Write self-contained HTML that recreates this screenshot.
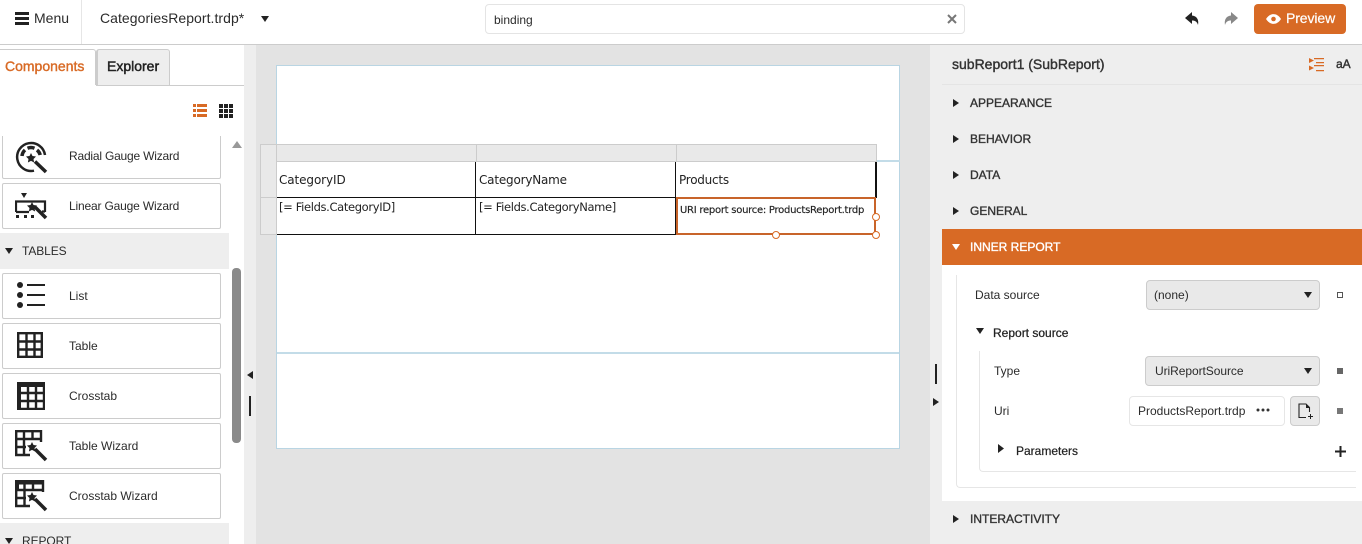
<!DOCTYPE html>
<html><head><meta charset="utf-8"><style>
html,body{margin:0;padding:0;width:1362px;height:544px;overflow:hidden;background:#fff}
body{position:relative;font-family:"Liberation Sans",sans-serif;font-size:12px;color:#2b2b2b}
.a,.t,svg{position:absolute}
.t{white-space:nowrap;line-height:16px}
.card{position:absolute;left:2px;width:217px;height:44px;border:1px solid #ccc;border-radius:2px;background:#fff}
.hd{position:absolute;left:970px;font-size:12px;line-height:16px;color:#333;-webkit-text-stroke:.35px currentColor}
.sel{position:absolute;background:#e9e9e9;border:1px solid #ccc;border-radius:4px;box-sizing:border-box}
.d{font-family:"DejaVu Sans",sans-serif;color:#222}
</style></head><body>
<!-- top bar -->
<div class="a" style="left:0;top:44px;width:1362px;height:1px;background:#ccc"></div>
<div class="a" style="left:81px;top:0;width:1px;height:44px;background:#e6e6e6"></div>
<svg style="left:15px;top:12px" width="14" height="13"><path d="M0 0h14v3H0zM0 5h14v3H0zM0 10h14v3H0z" fill="#222"/></svg>
<div class="t" style="left:34px;top:10px;font-size:14px">Menu</div>
<div class="t" style="left:100px;top:10px;font-size:14px;letter-spacing:.05px">CategoriesReport.trdp*</div>
<svg style="left:261px;top:16px" width="8" height="6"><path d="M0 0h8L4 6z" fill="#222"/></svg>
<div class="a" style="left:485px;top:4px;width:478px;height:28px;border:1px solid #e4e4e4;border-radius:4px"></div>
<div class="t" style="left:494px;top:12px">binding</div>
<svg style="left:947px;top:14px" width="10" height="10"><path d="M1 1l8 8M9 1l-8 8" stroke="#777" stroke-width="2"/></svg>
<svg style="left:1185px;top:12px" width="15" height="14"><path d="M7 0L0 6l7 6V8.500c3 0 5 1 6 4.500 1-5-1-9-6-9.500z" fill="#222"/></svg>
<svg style="left:1223px;top:12px" width="15" height="14"><path d="M8 0l7 6-7 6V8.500c-3 0-5 1-6 4.500-1-5 1-9 6-9.500z" fill="#888"/></svg>
<div class="a" style="left:1254px;top:4px;width:92px;height:30px;background:#d86a25;border-radius:4px"></div>
<svg style="left:1266px;top:14px" width="15" height="10"><path d="M0 5c4-6.500 11-6.500 15 0-4 6.500-11 6.500-15 0z" fill="#fff"/><circle cx="7.500" cy="5" r="2.300" fill="#d86a25"/></svg>
<div class="t" style="left:1286px;top:10px;font-size:14px;color:#fff;letter-spacing:-.1px;-webkit-text-stroke:.2px #fff">Preview</div>

<!-- left panel -->
<div class="a" style="left:244px;top:45px;width:12px;height:499px;background:#eee"></div>
<div class="a" style="left:96px;top:85px;width:148px;height:1px;background:#ccc"></div>
<div class="a" style="left:0;top:49px;width:96px;height:36px;background:#fff;border-top:1px solid #ccc;border-right:1px solid #ccc;border-top-right-radius:3px;box-sizing:border-box"></div>
<div class="a" style="left:96px;top:49px;width:74px;height:37px;background:#eee;border:1px solid #ccc;border-left-width:2px;border-radius:3px 3px 0 0;box-sizing:border-box"></div>
<div class="t" style="left:5px;top:58px;font-size:14px;color:#d86a25;-webkit-text-stroke:.4px #d86a25">Components</div>
<div class="t" style="left:107px;top:58px;font-size:14px;color:#222;-webkit-text-stroke:.45px #222">Explorer</div>
<svg style="left:193px;top:104px" width="14" height="13"><path d="M0 0h3v3H0zM4 0h10v3H4zM0 5h3v3H0zM4 5h10v3H4zM0 10h3v3H0zM4 10h10v3H4z" fill="#d86a25"/></svg>
<svg style="left:219px;top:104px" width="14" height="14"><path d="M0 0h4v4H0zM5 0h4v4H5zM10 0h4v4h-4zM0 5h4v4H0zM5 5h4v4H5zM10 5h4v4h-4zM0 10h4v4H0zM5 10h4v4H5zM10 10h4v4h-4z" fill="#222"/></svg>

<div class="card" style="top:133px;clip-path:inset(3px -2px -2px -2px)"></div>
<div class="card" style="top:183px"></div>
<div class="a" style="left:0;top:233px;width:229px;height:36px;background:#eee"></div>
<div class="card" style="top:273px"></div>
<div class="card" style="top:323px"></div>
<div class="card" style="top:373px"></div>
<div class="card" style="top:423px"></div>
<div class="card" style="top:473px"></div>
<div class="a" style="left:0;top:523px;width:229px;height:21px;background:#eee"></div>

<div class="t" style="left:69px;top:148px;letter-spacing:-.2px">Radial Gauge Wizard</div>
<div class="t" style="left:69px;top:198px;letter-spacing:-.17px">Linear Gauge Wizard</div>
<div class="t" style="left:22px;top:243px;letter-spacing:-.1px">TABLES</div>
<div class="t" style="left:69px;top:288px">List</div>
<div class="t" style="left:69px;top:338px">Table</div>
<div class="t" style="left:69px;top:388px">Crosstab</div>
<div class="t" style="left:69px;top:438px">Table Wizard</div>
<div class="t" style="left:69px;top:488px">Crosstab Wizard</div>
<div class="t" style="left:22px;top:533px;letter-spacing:-.1px">REPORT</div>
<svg style="left:5px;top:248px" width="8" height="6"><path d="M0 0h8L4 6z" fill="#222"/></svg>
<svg style="left:5px;top:538px" width="8" height="6"><path d="M0 0h8L4 6z" fill="#222"/></svg>

<!-- radial gauge -->
<svg style="left:15px;top:141px" width="34" height="34" fill="none">
<path d="M19 29.700A14 14 0 1 1 30 14" stroke="#222" stroke-width="2.500"/>
<path d="M7 15A9.500 9.500 0 0 1 10 9M12.500 7.200A9.500 9.500 0 0 1 19.500 7.200M22 9A9.500 9.500 0 0 1 25.200 14" stroke="#222" stroke-width="3.500"/>
<path d="M16 12l1.500 3 3.500.500-2.500 2.500.600 3.500-3.100-1.600-3.100 1.600.600-3.500-2.500-2.500 3.500-.500z" fill="#222"/>
<path d="M20 20.500L31 31" stroke="#222" stroke-width="3.500"/></svg>
<!-- linear gauge -->
<svg style="left:15px;top:192px" width="34" height="32" fill="none">
<path d="M6 1h6L9 6z" fill="#222"/>
<path d="M1 20V9.500h29V20M1 20h13M27 19.500h3" stroke="#222" stroke-width="2.200"/>
<path d="M1 23h3v3H1zM9 23h3v3H9zM16 23h3v3h-3z" fill="#222"/>
<path d="M17 10l1.500 3 3.500.500-2.500 2.500.600 3.500-3.100-1.600-3.100 1.600.600-3.500-2.500-2.500 3.500-.500z" fill="#222"/>
<path d="M20 15l11 11" stroke="#222" stroke-width="3.500"/></svg>
<!-- list -->
<svg style="left:17px;top:281px" width="30" height="30"><circle cx="3" cy="4" r="3" fill="#222"/><circle cx="3" cy="14" r="3" fill="#222"/><circle cx="3" cy="24" r="3" fill="#222"/><path d="M10 3h18v2H10zM10 13h18v2H10zM10 23h18v2H10z" fill="#222"/></svg>
<!-- table -->
<svg style="left:17px;top:332px" width="26" height="26" fill="none"><path d="M1.200 1.200h23.600v23.600H1.200zM9.500 1v24M17.500 1v24M1 9.500h24M1 17.500h24" stroke="#222" stroke-width="2.400"/></svg>
<!-- crosstab -->
<svg style="left:17px;top:382px" width="28" height="28" fill="none"><path d="M1 1h26v26H1zM11 1v26M19 1v26M1 11h26M1 19h26" stroke="#222" stroke-width="2.400"/><path d="M0 0h28v5H0zM0 0h4v28H0z" fill="#222"/></svg>
<!-- table wizard -->
<svg style="left:15px;top:430px" width="34" height="34" fill="none"><path d="M15 25H1.200V1.200H26V12M9 1v24M17.500 1v8M1 9h25M1 17h10" stroke="#222" stroke-width="2.400"/><path d="M17 12l1.500 3 3.500.500-2.500 2.500.600 3.500-3.100-1.600-3.100 1.600.600-3.500-2.500-2.500 3.500-.500z" fill="#222"/><path d="M20 19l11 11" stroke="#222" stroke-width="3.500"/></svg>
<!-- crosstab wizard -->
<svg style="left:15px;top:480px" width="34" height="34" fill="none"><path d="M15 26H1.200V1.200H28V12M9.500 1v25M18 1v9M1 10h27M1 18h10" stroke="#222" stroke-width="2.400"/><path d="M0 0h28v4.500H0zM0 0h4v10H0z" fill="#222"/><path d="M17 12l1.500 3 3.500.500-2.500 2.500.600 3.500-3.100-1.600-3.100 1.600.600-3.500-2.500-2.500 3.500-.500z" fill="#222"/><path d="M20 19l11 11" stroke="#222" stroke-width="3.500"/></svg>

<!-- scrollbar -->
<svg style="left:231px;top:140px" width="12" height="8"><path d="M1 8L6 1l5 7z" fill="#999"/></svg>
<div class="a" style="left:232px;top:268px;width:9px;height:175px;background:#8a8a8a;border-radius:4px"></div>
<svg style="left:247px;top:371px" width="6" height="8"><path d="M6 0v8L0 4z" fill="#222"/></svg>
<div class="a" style="left:249px;top:396px;width:2px;height:20px;background:#222"></div>

<!-- canvas -->
<div class="a" style="left:256px;top:45px;width:674px;height:499px;background:#e3e3e3"></div>
<div class="a" style="left:276px;top:65px;width:622px;height:382px;background:#fff;border:1px solid #b9d5e3"></div>
<div class="a" style="left:277px;top:160px;width:623px;height:2px;background:#c3dce8"></div>
<div class="a" style="left:277px;top:352px;width:622px;height:2px;background:#c3dce8"></div>
<!-- table grips -->
<div class="a" style="left:260px;top:144px;width:615px;height:16px;background:#e9e9e9;border:1px solid #ccc"></div>
<div class="a" style="left:260px;top:144px;height:91px;background:#e9e9e9;border:1px solid #ccc;box-sizing:border-box;width:17px"></div>
<div class="a" style="left:260px;top:197px;width:17px;height:1px;background:#ccc"></div>
<div class="a" style="left:476px;top:144px;width:1px;height:17px;background:#ccc"></div>
<div class="a" style="left:676px;top:144px;width:1px;height:17px;background:#ccc"></div>
<!-- table -->
<div class="a" style="left:277px;top:162px;width:600px;height:73px;background:#fff"></div>
<div class="a" style="left:277px;top:197px;width:399px;height:1px;background:#111"></div>
<div class="a" style="left:676px;top:197px;width:200px;height:1px;background:#111"></div>
<div class="a" style="left:277px;top:234px;width:399px;height:1px;background:#111"></div>
<div class="a" style="left:475px;top:162px;width:1px;height:73px;background:#111"></div>
<div class="a" style="left:675px;top:162px;width:1px;height:73px;background:#111"></div>
<div class="a" style="left:875px;top:162px;width:2px;height:36px;background:#111"></div>
<div class="t d" style="left:279px;top:172px;font-size:12px;letter-spacing:-.1px">CategoryID</div>
<div class="t d" style="left:479px;top:172px;font-size:12px;letter-spacing:-.2px">CategoryName</div>
<div class="t d" style="left:679px;top:172px;font-size:12px;letter-spacing:-.25px">Products</div>
<div class="t d" style="left:279px;top:199px;font-size:11.500px;letter-spacing:-.35px">[= Fields.CategoryID]</div>
<div class="t d" style="left:479px;top:199px;font-size:11.500px;letter-spacing:-.35px">[= Fields.CategoryName]</div>
<div class="a" style="left:676px;top:197px;width:196px;height:34px;border:2px solid #c8642a;background:#fff"></div>
<div class="t d" style="left:680px;top:203px;font-size:10px;letter-spacing:-.26px;-webkit-text-stroke:.15px #222">URI report source: ProductsReport.trdp</div>
<div class="a" style="left:872px;top:213px;width:6px;height:6px;border:1px solid #d86a25;border-radius:50%;background:#fff"></div>
<div class="a" style="left:772px;top:231px;width:6px;height:6px;border:1px solid #d86a25;border-radius:50%;background:#fff"></div>
<div class="a" style="left:872px;top:231px;width:6px;height:6px;border:1px solid #d86a25;border-radius:50%;background:#fff"></div>

<!-- right panel -->
<div class="a" style="left:930px;top:45px;width:432px;height:499px;background:#eee"></div>
<div class="a" style="left:935px;top:364px;width:2px;height:20px;background:#222"></div>
<svg style="left:933px;top:398px" width="6" height="8"><path d="M0 0v8l6-4z" fill="#222"/></svg>
<div class="t" style="left:952px;top:56px;font-size:14px;color:#333;-webkit-text-stroke:.4px #333">subReport1 (SubReport)</div>
<div class="a" style="left:942px;top:84px;width:420px;height:1px;background:#e4e4e4"></div>
<svg style="left:1309px;top:57px" width="16" height="15"><path d="M0 1l5 2.500L0 6zM0 8.500l5 2.500-5 2.500z" fill="#d86a25"/><path d="M5 1h10v1.200H5zM7 5h8v1.200H7zM5 8h10v1.200H5zM7 13h8v1.200H7z" fill="#d86a25"/></svg>
<div class="t" style="left:1336px;top:56px;color:#333;-webkit-text-stroke:.4px #333;font-size:12px">aA</div>

<div class="hd" style="top:95px">APPEARANCE</div>
<div class="hd" style="top:131px">BEHAVIOR</div>
<div class="hd" style="top:167px">DATA</div>
<div class="hd" style="top:203px">GENERAL</div>
<svg style="left:953px;top:99px" width="6" height="8"><path d="M0 0v8l6-4z" fill="#222"/></svg>
<svg style="left:953px;top:135px" width="6" height="8"><path d="M0 0v8l6-4z" fill="#222"/></svg>
<svg style="left:953px;top:171px" width="6" height="8"><path d="M0 0v8l6-4z" fill="#222"/></svg>
<svg style="left:953px;top:207px" width="6" height="8"><path d="M0 0v8l6-4z" fill="#222"/></svg>
<div class="a" style="left:942px;top:229px;width:420px;height:36px;background:#d86a25"></div>
<svg style="left:952px;top:244px" width="8" height="6"><path d="M0 0h8L4 6z" fill="#fff"/></svg>
<div class="hd" style="top:239px;color:#fff">INNER REPORT</div>
<div class="a" style="left:942px;top:265px;width:420px;height:236px;background:#fff"></div>
<div class="a" style="left:956px;top:275px;width:399px;height:212px;border-left:1px solid #e6e6e6;border-bottom:1px solid #e6e6e6;border-bottom-left-radius:4px"></div>
<div class="a" style="left:979px;top:351px;width:376px;height:120px;border-left:1px solid #e6e6e6;border-bottom:1px solid #e6e6e6;border-bottom-left-radius:4px"></div>
<div class="t" style="left:975px;top:287px">Data source</div>
<div class="sel" style="left:1146px;top:280px;width:174px;height:30px"></div>
<div class="t" style="left:1154px;top:287px">(none)</div>
<svg style="left:1304px;top:292px" width="8" height="6"><path d="M0 0h8L4 6z" fill="#222"/></svg>
<div class="a" style="left:1337px;top:292px;width:4px;height:4px;border:1px solid #555"></div>
<svg style="left:976px;top:328px" width="8" height="6"><path d="M0 0h8L4 6z" fill="#222"/></svg>
<div class="t" style="left:993px;top:325px;color:#222;-webkit-text-stroke:.25px #222">Report source</div>
<div class="t" style="left:994px;top:363px">Type</div>
<div class="sel" style="left:1145px;top:356px;width:175px;height:30px"></div>
<div class="t" style="left:1155px;top:363px;letter-spacing:-.06px">UriReportSource</div>
<svg style="left:1304px;top:368px" width="8" height="6"><path d="M0 0h8L4 6z" fill="#222"/></svg>
<div class="a" style="left:1337px;top:368px;width:6px;height:6px;background:#666"></div>
<div class="t" style="left:994px;top:403px">Uri</div>
<div class="a" style="left:1129px;top:396px;width:154px;height:28px;border:1px solid #e6e6e6;border-radius:4px;background:#fff"></div>
<div class="t" style="left:1138px;top:403px">ProductsReport.trdp</div>
<svg style="left:1256px;top:408px" width="14" height="4"><circle cx="2" cy="2" r="1.500" fill="#333"/><circle cx="7" cy="2" r="1.500" fill="#333"/><circle cx="12" cy="2" r="1.500" fill="#333"/></svg>
<div class="sel" style="left:1290px;top:396px;width:30px;height:30px"></div>
<svg style="left:1298px;top:403px" width="16" height="17" fill="none"><path d="M8 14.500H1V1h7l3.500 3.500V9" stroke="#222" stroke-width="1.100"/><path d="M8 1v4h4z" fill="#222"/><path d="M10 13.500h5M12.500 11v5" stroke="#222"/></svg>
<div class="a" style="left:1337px;top:408px;width:6px;height:6px;background:#777"></div>
<svg style="left:998px;top:444px" width="7" height="9"><path d="M0 0v9l6-4.500z" fill="#222"/></svg>
<div class="t" style="left:1016px;top:443px;color:#222;-webkit-text-stroke:.2px #222">Parameters</div>
<svg style="left:1335px;top:446px" width="11" height="11"><path d="M4.500 0h2v4.500H11v2H6.500V11h-2V6.500H0v-2h4.500z" fill="#222"/></svg>
<svg style="left:953px;top:515px" width="6" height="8"><path d="M0 0v8l6-4z" fill="#222"/></svg>
<div class="hd" style="top:511px">INTERACTIVITY</div>
</body></html>
